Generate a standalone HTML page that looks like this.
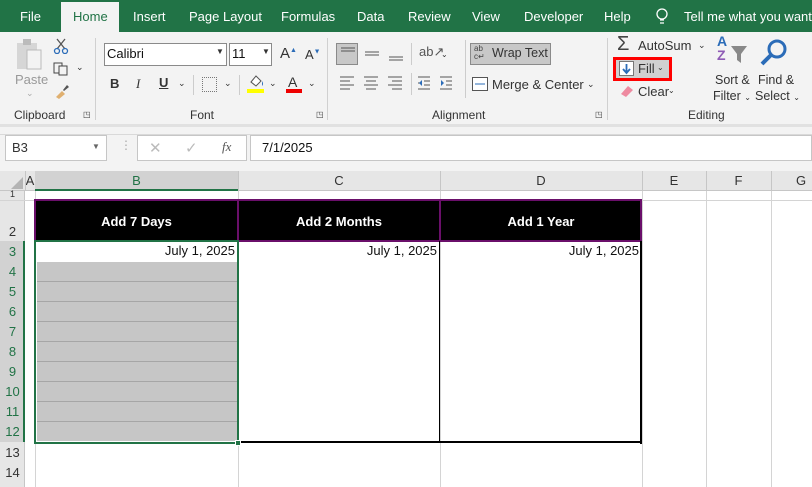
<!DOCTYPE html>
<html><head><meta charset="utf-8"><style>
*{margin:0;padding:0;box-sizing:border-box}
body{width:812px;height:487px;overflow:hidden;background:#fff;font-family:"Segoe UI","Liberation Sans",sans-serif;position:relative;font-size:12px;color:#222}
.a{position:absolute}
.tab{position:absolute;top:9px;color:#fff;font-size:13px;white-space:nowrap}
.t{position:absolute;font-size:12px;color:#333;white-space:nowrap}
.vl{position:absolute;width:1px;background:#d4d4d4}
.hl{position:absolute;height:1px;background:#d4d4d4}
.rh{position:absolute;left:0;width:25px;text-align:center;font-size:13px;color:#333;font-family:"Liberation Sans",sans-serif}
.ch{position:absolute;top:171px;height:20px;text-align:center;font-size:13px;line-height:20px;color:#333;font-family:"Liberation Sans",sans-serif}
.hd{position:absolute;top:200px;height:41px;background:#000;color:#fff;font-weight:bold;font-size:13px;text-align:center;line-height:44px;font-family:"Liberation Sans",sans-serif}
.dt{position:absolute;top:243px;font-size:13px;text-align:right;font-family:"Liberation Sans",sans-serif;color:#111}
</style></head><body>
<div class="a" style="left:0;top:0;width:812px;height:32px;background:#217346"></div>
<div class="a" style="left:61px;top:2px;width:58px;height:31px;background:#f3f3f3"></div>
<div class="tab" style="left:20px">File</div>
<div class="tab" style="left:73px;color:#217346">Home</div>
<div class="tab" style="left:133px">Insert</div>
<div class="tab" style="left:189px">Page Layout</div>
<div class="tab" style="left:281px">Formulas</div>
<div class="tab" style="left:357px">Data</div>
<div class="tab" style="left:408px">Review</div>
<div class="tab" style="left:472px">View</div>
<div class="tab" style="left:524px">Developer</div>
<div class="tab" style="left:604px">Help</div>
<svg class="a" style="left:655px;top:8px" width="14" height="18"><circle cx="7" cy="6" r="5" fill="none" stroke="#fff" stroke-width="1.3"/><path d="M5 12h4M5 15h4" stroke="#fff" stroke-width="1.3"/></svg>
<div class="tab" style="left:684px">Tell me what you want to</div>
<div class="a" style="left:0;top:32px;width:812px;height:92px;background:#f3f3f3"></div>
<div class="a" style="left:0;top:124px;width:812px;height:3px;background:#e1e1e1"></div>
<div class="a" style="left:0;top:127px;width:812px;height:44px;background:#f3f3f3"></div>
<div class="a" style="left:0;top:134px;width:812px;height:1px;background:#d9d9d9"></div>
<svg class="a" style="left:16px;top:38px" width="30" height="34"><rect x="1" y="5" width="20" height="26" fill="#d6d6d6"/><rect x="7" y="1" width="8" height="6" fill="#bbb"/><rect x="11" y="12" width="14" height="19" fill="#f3f3f3" stroke="#bbb"/></svg>
<div class="t" style="left:15px;top:72px;color:#999;font-size:13px">Paste</div>
<div class="t" style="left:26px;top:88px;color:#aaa;font-size:9px">⌄</div>
<svg class="a" style="left:53px;top:38px" width="16" height="16"><path d="M4 1l8 10M12 1L4 11" stroke="#555" stroke-width="1.3"/><circle cx="4" cy="13" r="2.5" fill="none" stroke="#2b6cb8" stroke-width="1.3"/><circle cx="12" cy="13" r="2.5" fill="none" stroke="#2b6cb8" stroke-width="1.3"/></svg>
<svg class="a" style="left:53px;top:62px" width="16" height="14"><rect x="1" y="1" width="8" height="10" fill="none" stroke="#444"/><rect x="6" y="4" width="8" height="9" fill="#f3f3f3" stroke="#444"/></svg>
<div class="t" style="left:76px;top:62px;font-size:9px">⌄</div>
<svg class="a" style="left:54px;top:83px" width="16" height="16"><path d="M2 14l6-6 3 3-6 5z" fill="#e0b070"/><path d="M9 7l4-5 2 2-5 4z" fill="#555"/></svg>
<div class="t" style="left:14px;top:108px">Clipboard</div>
<div class="t" style="left:83px;top:110px;font-size:8px">◳</div>
<div class="a" style="left:95px;top:38px;width:1px;height:82px;background:#d0d0d0"></div>
<div class="a" style="left:104px;top:43px;width:123px;height:23px;background:#fff;border:1px solid #8a8a8a"></div>
<div class="t" style="left:107px;top:46px;font-size:13px;color:#111">Calibri</div>
<div class="t" style="left:216px;top:47px;font-size:8px">▼</div>
<div class="a" style="left:229px;top:43px;width:43px;height:23px;background:#fff;border:1px solid #8a8a8a"></div>
<div class="t" style="left:232px;top:46px;font-size:13px;color:#111">11</div>
<div class="t" style="left:262px;top:47px;font-size:8px">▼</div>
<div class="t" style="left:280px;top:45px;font-size:15px">A<sup style="font-size:7px;color:#2b6cb8">▲</sup></div>
<div class="t" style="left:305px;top:47px;font-size:13px">A<sup style="font-size:7px;color:#2b6cb8">▼</sup></div>
<div class="t" style="left:110px;top:76px;font-weight:bold;font-size:13px">B</div>
<div class="t" style="left:136px;top:76px;font-style:italic;font-size:13px;font-family:'Liberation Serif',serif">I</div>
<div class="t" style="left:159px;top:75px;text-decoration:underline;font-size:13px;font-weight:bold">U</div>
<div class="t" style="left:178px;top:78px;font-size:9px">⌄</div>
<div class="a" style="left:193px;top:75px;width:1px;height:20px;background:#ccc"></div>
<div class="a" style="left:202px;top:77px;width:15px;height:15px;border:1px dotted #777"></div>
<div class="t" style="left:224px;top:78px;font-size:9px">⌄</div>
<div class="a" style="left:239px;top:75px;width:1px;height:20px;background:#ccc"></div>
<svg class="a" style="left:247px;top:74px" width="18" height="14"><path d="M4 8l5-6 5 5-5 5z" fill="#fff" stroke="#555"/><path d="M15 7q2 3 0 5" fill="#2b6cb8"/></svg>
<div class="a" style="left:247px;top:89px;width:17px;height:4px;background:#ffff00"></div>
<div class="t" style="left:269px;top:78px;font-size:9px">⌄</div>
<div class="t" style="left:288px;top:74px;font-size:14px">A</div>
<div class="a" style="left:286px;top:89px;width:16px;height:4px;background:#e00"></div>
<div class="t" style="left:308px;top:78px;font-size:9px">⌄</div>
<div class="t" style="left:190px;top:108px">Font</div>
<div class="t" style="left:316px;top:110px;font-size:8px">◳</div>
<div class="a" style="left:327px;top:38px;width:1px;height:82px;background:#d0d0d0"></div>
<div class="a" style="left:336px;top:43px;width:22px;height:22px;background:#c8c8c8;border:1px solid #8a8a8a"></div>
<svg class="a" style="left:339px;top:46px" width="100" height="18"><path d="M2 2h14M2 5h14M26 6h14M26 9h14M50 11h14M50 14h14" stroke="#555"/></svg>
<div class="t" style="left:419px;top:44px;font-size:13px;color:#555">ab↗</div>
<div class="t" style="left:441px;top:50px;font-size:8px">⌄</div>
<svg class="a" style="left:338px;top:75px" width="120" height="16"><path d="M2 2h14M2 6h10M2 10h14M2 14h10M26 2h14M28 6h10M26 10h14M28 14h10M50 2h14M54 6h10M50 10h14M54 14h10" stroke="#555"/><path d="M80 2h12M86 6h6M86 10h6M80 14h12M84 8h-4" stroke="#555"/><path d="M81 8l3-3v6z" fill="#2b6cb8"/><path d="M102 2h12M108 6h6M108 10h6M102 14h12" stroke="#555"/><path d="M106 8l-3-3v6z" fill="#2b6cb8"/></svg>
<div class="a" style="left:411px;top:43px;width:1px;height:22px;background:#ccc"></div>
<div class="a" style="left:411px;top:73px;width:1px;height:22px;background:#ccc"></div>
<div class="a" style="left:465px;top:40px;width:1px;height:58px;background:#ccc"></div>
<div class="a" style="left:470px;top:43px;width:81px;height:22px;background:#c8c8c8;border:1px solid #8a8a8a"></div>
<div class="t" style="left:474px;top:45px;font-size:8px;line-height:8px;color:#444">ab<br>c↵</div>
<div class="t" style="left:492px;top:46px;font-size:12.5px">Wrap Text</div>
<svg class="a" style="left:472px;top:77px" width="16" height="14"><rect x="0.5" y="0.5" width="15" height="13" fill="#fff" stroke="#555"/><path d="M3 7h10" stroke="#2b6cb8"/></svg>
<div class="t" style="left:492px;top:77px;font-size:13px">Merge &amp; Center</div>
<div class="t" style="left:587px;top:79px;font-size:9px">⌄</div>
<div class="t" style="left:432px;top:108px">Alignment</div>
<div class="t" style="left:595px;top:110px;font-size:8px">◳</div>
<div class="a" style="left:607px;top:38px;width:1px;height:82px;background:#d0d0d0"></div>
<div class="t" style="left:617px;top:33px;font-size:20px;color:#444">Σ</div>
<div class="t" style="left:638px;top:38px;font-size:13px">AutoSum</div>
<div class="t" style="left:698px;top:40px;font-size:9px">⌄</div>
<div class="a" style="left:613px;top:57px;width:59px;height:24px;border:3px solid #ff0000;background:#d0d0d0"></div>
<svg class="a" style="left:619px;top:61px" width="16" height="16"><rect x="0.5" y="0.5" width="14" height="14" fill="#fff" stroke="#777"/><path d="M7.5 3v9M4 8l3.5 4 3.5-4" stroke="#2b6cb8" stroke-width="1.8" fill="none"/></svg>
<div class="t" style="left:638px;top:61px;font-size:13px">Fill</div>
<div class="t" style="left:657px;top:63px;font-size:8px">⌄</div>
<svg class="a" style="left:619px;top:84px" width="16" height="14"><path d="M2 10l7-8 5 4-7 7z" fill="#ee8aa0"/></svg>
<div class="t" style="left:638px;top:84px;font-size:13px">Clear</div>
<div class="t" style="left:668px;top:86px;font-size:8px">⌄</div>
<div class="t" style="left:717px;top:34px;font-size:14px;font-weight:bold;line-height:14px;color:#2b6cb8">A<br><span style="color:#8e5bb5">Z</span></div>
<svg class="a" style="left:730px;top:45px" width="18" height="20"><path d="M1 1h16l-6 8v9l-4-3V9z" fill="#888"/></svg>
<svg class="a" style="left:759px;top:38px" width="30" height="30"><circle cx="18" cy="11" r="8" fill="none" stroke="#2b6cb8" stroke-width="3"/><path d="M12 17L3 26" stroke="#2b6cb8" stroke-width="4"/></svg>
<div class="t" style="left:715px;top:73px;font-size:12.5px">Sort &amp;</div>
<div class="t" style="left:713px;top:89px;font-size:12.5px">Filter <span style="font-size:8px">⌄</span></div>
<div class="t" style="left:758px;top:73px;font-size:12.5px">Find &amp;</div>
<div class="t" style="left:755px;top:89px;font-size:12.5px">Select <span style="font-size:8px">⌄</span></div>
<div class="t" style="left:688px;top:108px">Editing</div>
<div class="a" style="left:5px;top:135px;width:102px;height:26px;background:#fff;border:1px solid #c6c6c6"></div>
<div class="t" style="left:12px;top:140px;font-size:13px">B3</div>
<div class="t" style="left:92px;top:142px;font-size:8px;color:#666">▼</div>
<div class="t" style="left:120px;top:138px;font-size:12px;color:#aaa">⋮</div>
<div class="a" style="left:137px;top:135px;width:110px;height:26px;background:#fff;border:1px solid #c6c6c6"></div>
<div class="t" style="left:149px;top:139px;font-size:15px;color:#bbb">✕</div>
<div class="t" style="left:185px;top:139px;font-size:15px;color:#bbb">✓</div>
<div class="t" style="left:222px;top:139px;font-size:13px;font-style:italic;font-family:'Liberation Serif',serif;color:#555">fx</div>
<div class="a" style="left:250px;top:135px;width:562px;height:26px;background:#fff;border:1px solid #c6c6c6"></div>
<div class="t" style="left:262px;top:140px;font-size:13px;color:#111">7/1/2025</div>
<div class="a" style="left:0;top:171px;width:812px;height:20px;background:#e6e6e6;border-bottom:1px solid #c6c6c6"></div>
<div class="a" style="left:35px;top:171px;width:203px;height:20px;background:#d2d2d2;border-bottom:2px solid #217346"></div>
<svg class="a" style="left:10px;top:176px" width="14" height="14"><path d="M13 1V13H1z" fill="#b4b4b4"/></svg>
<div class="ch" style="left:25px;width:10px">A</div>
<div class="ch" style="left:35px;width:203px;color:#217346">B</div>
<div class="ch" style="left:238px;width:202px">C</div>
<div class="ch" style="left:440px;width:202px">D</div>
<div class="ch" style="left:642px;width:64px">E</div>
<div class="ch" style="left:706px;width:65px">F</div>
<div class="ch" style="left:771px;width:60px">G</div>
<div class="vl" style="left:25px;top:171px;height:20px;background:#c6c6c6"></div>
<div class="vl" style="left:238px;top:171px;height:20px;background:#c6c6c6"></div>
<div class="vl" style="left:440px;top:171px;height:20px;background:#c6c6c6"></div>
<div class="vl" style="left:642px;top:171px;height:20px;background:#c6c6c6"></div>
<div class="vl" style="left:706px;top:171px;height:20px;background:#c6c6c6"></div>
<div class="vl" style="left:771px;top:171px;height:20px;background:#c6c6c6"></div>
<div class="a" style="left:0;top:191px;width:25px;height:296px;background:#e6e6e6;border-right:1px solid #c6c6c6"></div>
<div class="a" style="left:0;top:241px;width:25px;height:201px;background:#d2d2d2;border-right:2px solid #217346"></div>
<div class="vl" style="left:35px;top:191px;height:296px"></div>
<div class="vl" style="left:238px;top:191px;height:296px"></div>
<div class="vl" style="left:440px;top:191px;height:296px"></div>
<div class="vl" style="left:642px;top:191px;height:296px"></div>
<div class="vl" style="left:706px;top:191px;height:296px"></div>
<div class="vl" style="left:771px;top:191px;height:296px"></div>
<div class="a" style="left:0;top:200px;width:812px;height:1px;background:#d4d4d4"></div>
<div class="a" style="left:0;top:241px;width:812px;height:241px;background:repeating-linear-gradient(to bottom,transparent 0,transparent 20px,#d4d4d4 20px,#d4d4d4 21px);background-size:100% 20.1px"></div>
<div class="rh" style="top:189px;font-size:9px;height:10px;overflow:hidden">1</div>
<div class="rh" style="top:224px">2</div>
<div class="rh" style="top:244px;color:#217346">3</div>
<div class="rh" style="top:264px;color:#217346">4</div>
<div class="rh" style="top:284px;color:#217346">5</div>
<div class="rh" style="top:304px;color:#217346">6</div>
<div class="rh" style="top:324px;color:#217346">7</div>
<div class="rh" style="top:344px;color:#217346">8</div>
<div class="rh" style="top:364px;color:#217346">9</div>
<div class="rh" style="top:384px;color:#217346">10</div>
<div class="rh" style="top:404px;color:#217346">11</div>
<div class="rh" style="top:424px;color:#217346">12</div>
<div class="rh" style="top:445px">13</div>
<div class="rh" style="top:465px">14</div>
<div class="hd" style="left:35px;width:203px">Add 7 Days</div>
<div class="hd" style="left:238px;width:202px">Add 2 Months</div>
<div class="hd" style="left:440px;width:202px">Add 1 Year</div>
<div class="a" style="left:34px;top:199px;width:608px;height:43px;border:2px solid #6a0f6a"></div>
<div class="a" style="left:237px;top:199px;width:2px;height:43px;background:#6a0f6a"></div>
<div class="a" style="left:439px;top:199px;width:2px;height:43px;background:#6a0f6a"></div>
<div class="a" style="left:439px;top:241px;width:1px;height:201px;background:#000"></div>
<div class="a" style="left:640px;top:241px;width:2px;height:203px;background:#000"></div>
<div class="a" style="left:238px;top:441px;width:404px;height:2px;background:#000"></div>
<div class="a" style="left:37px;top:262px;width:200px;height:179px;background:repeating-linear-gradient(to bottom,#c6c6c6 0,#c6c6c6 19px,#a6a6a6 19px,#a6a6a6 20px)"></div>
<div class="a" style="left:34px;top:240px;width:205px;height:204px;border:2px solid #217346"></div>
<div class="a" style="left:235px;top:440px;width:6px;height:6px;background:#217346;border:1px solid #fff"></div>
<div class="dt" style="left:38px;width:197px">July 1, 2025</div>
<div class="dt" style="left:240px;width:197px">July 1, 2025</div>
<div class="dt" style="left:442px;width:197px">July 1, 2025</div>
</body></html>
